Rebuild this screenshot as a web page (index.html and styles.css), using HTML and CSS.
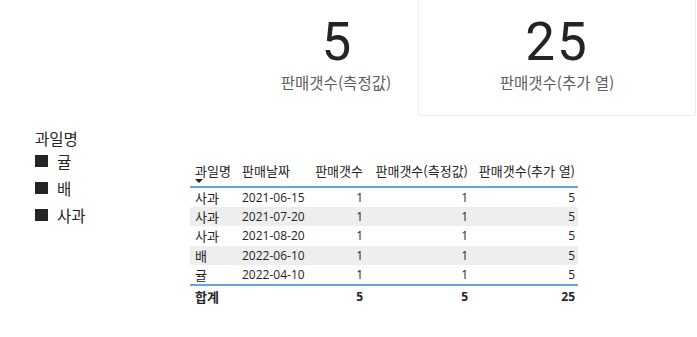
FILE: index.html
```html
<!DOCTYPE html>
<html lang="ko">
<head>
    <meta charset="UTF-8">
    <meta name="viewport" content="width=device-width, initial-scale=1.0">
    <title>판매 보고서</title>
    <link rel="stylesheet" href="styles.css">
</head>
<body>
    <!-- Cards -->
    <div class="cards">
        <div class="card">
            <div class="card-value">5</div>
            <div class="card-label">판매갯수(측정값)</div>
        </div>
        <div class="card card-framed">
            <div class="card-value">25</div>
            <div class="card-label">판매갯수(추가 열)</div>
        </div>
    </div>

    <div class="main">
        <!-- Slicer -->
        <div class="slicer">
            <div class="slicer-title">과일명</div>
            <div class="slicer-item"><span class="box"></span>귤</div>
            <div class="slicer-item"><span class="box"></span>배</div>
            <div class="slicer-item"><span class="box"></span>사과</div>
        </div>

        <!-- Table -->
        <table class="grid">
            <thead>
                <tr>
                    <th class="c-name">과일명<span class="sort"></span></th>
                    <th class="c-date">판매날짜</th>
                    <th class="num c-cnt">판매갯수</th>
                    <th class="num c-measure">판매갯수(측정값)</th>
                    <th class="num c-col">판매갯수(추가 열)</th>
                </tr>
            </thead>
            <tbody>
                <tr><td>사과</td><td class="date">2021-06-15</td><td class="num">1</td><td class="num">1</td><td class="num">5</td></tr>
                <tr><td>사과</td><td class="date">2021-07-20</td><td class="num">1</td><td class="num">1</td><td class="num">5</td></tr>
                <tr><td>사과</td><td class="date">2021-08-20</td><td class="num">1</td><td class="num">1</td><td class="num">5</td></tr>
                <tr><td>배</td><td class="date">2022-06-10</td><td class="num">1</td><td class="num">1</td><td class="num">5</td></tr>
                <tr><td>귤</td><td class="date">2022-04-10</td><td class="num">1</td><td class="num">1</td><td class="num">5</td></tr>
            </tbody>
            <tfoot>
                <tr><td>합계</td><td></td><td class="num">5</td><td class="num">5</td><td class="num">25</td></tr>
            </tfoot>
        </table>
    </div>
</body>
</html>
```

FILE: styles.css
```css
body {
    margin: 0;
    padding: 0;
    background-color: #ffffff;
    color: #252423;
    font-family: "Open Sans", "Noto Sans CJK KR", sans-serif;
}
.cards {
    display: flex;
    justify-content: flex-end;
    gap: 2px;
    padding-right: 1px;
    height: 116px;
}
.card {
    width: 160px;
    box-sizing: border-box;
    text-align: center;
    padding-top: 16px;
}
.card-framed {
    width: 278px;
    border: 1px solid #ececec;
    border-top: none;
    border-radius: 0 0 3px 3px;
}
.card-value {
    font-family: Roboto, sans-serif;
    font-size: 53px;
    line-height: 53px;
    letter-spacing: -1px;
    color: #252423;
}
.card-framed .card-value {
    letter-spacing: 2px;
}
.card-label {
    margin-top: 4px;
    font-family: "Noto Sans CJK KR", sans-serif;
    font-size: 15.5px;
    line-height: 18px;
    color: #605e5c;
}
.main {
    display: flex;
    align-items: flex-start;
    padding-left: 35px;
    padding-top: 13px;
}
.slicer {
    width: 155px;
    font-family: "Noto Sans CJK KR", sans-serif;
    font-size: 15.5px;
    color: #252423;
}
.slicer-title {
    line-height: 18px;
}
.slicer-item {
    display: flex;
    align-items: center;
    gap: 9px;
    height: 27px;
}
.box {
    width: 13px;
    height: 12px;
    background-color: #252423;
}
.grid {
    margin-top: 31px;
    width: 388px;
    table-layout: fixed;
    border-collapse: collapse;
    font-family: "Noto Sans CJK KR", sans-serif;
    font-size: 13px;
}
.grid th {
    font-weight: normal;
    text-align: left;
    vertical-align: top;
    padding: 2px 5px 0;
    line-height: 17px;
    height: 27px;
    box-sizing: border-box;
    border-bottom: 2px solid #5ea6e6;
    white-space: nowrap;
}
.grid td {
    padding: 0 5px;
    height: 19.2px;
    line-height: 19px;
    white-space: nowrap;
}
.grid .date,
.grid td.num {
    font-family: "Open Sans", sans-serif;
    font-size: 12px;
}
.grid .num {
    text-align: right;
    padding-right: 3px;
}
.c-name { width: 47px; }
.c-date { width: 72px; }
.c-cnt { width: 57px; }
.c-measure { width: 105px; }
.c-col { width: 107px; }
.sort {
    display: block;
    width: 0;
    height: 0;
    border-left: 4px solid transparent;
    border-right: 4px solid transparent;
    border-top: 4px solid #252423;
}
.grid tbody tr:nth-child(even) {
    background-color: #eeeeee;
}
.grid tfoot td {
    border-top: 2px solid #5ea6e6;
    font-weight: bold;
    height: 21px;
}
```
